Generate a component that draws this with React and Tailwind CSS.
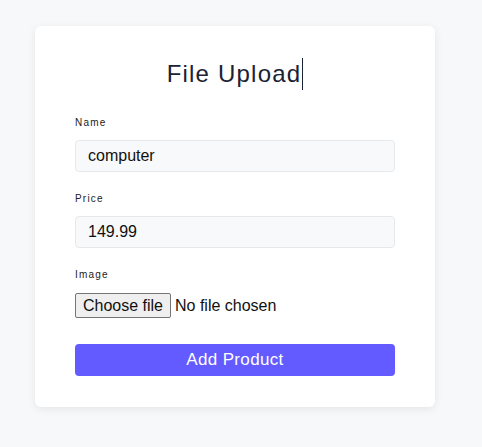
export default function App() {
  return (
    <div className="min-h-[447px] bg-[#f7f8fa] pt-[26px] font-['Liberation_Sans',Arial,sans-serif]">
      <div className="ml-[35px] w-[400px] rounded-md bg-white px-10 pt-8 pb-[31px] shadow-[0_2px_8px_rgba(0,0,0,0.08)]">
        <h1 className="flex justify-center text-[24px] leading-8 tracking-[0.05em] text-[#1a2233]">
          <span className="border-r border-[#1a2233] pr-[1px]">File Upload</span>
        </h1>

        <label className="mt-[26px] block text-[10px] leading-[14px] tracking-[0.12em] text-[#222]">Name</label>
        <input
          type="text"
          defaultValue="computer"
          className="mt-[10px] block h-8 w-full rounded border border-[#e6e8eb] bg-[#f8f9fb] px-3 text-base text-[#111] outline-none"
        />

        <label className="mt-[20px] block text-[10px] leading-[14px] tracking-[0.12em] text-[#222]">Price</label>
        <input
          type="text"
          defaultValue="149.99"
          className="mt-[10px] block h-8 w-full rounded border border-[#e6e8eb] bg-[#f8f9fb] px-3 text-base text-[#111] outline-none"
        />

        <label className="mt-[20px] block text-[10px] leading-[14px] tracking-[0.12em] text-[#222]">Image</label>
        <label className="mt-[11px] flex h-[25px] items-center gap-[4px] text-base text-[#111]">
          <span className="flex h-[25px] w-[96px] items-center justify-center rounded-[2px] border border-[#767676] bg-[#efefef]">
            Choose file
          </span>
          <span>No file chosen</span>
          <input type="file" className="hidden" />
        </label>

        <button className="mt-[26px] block h-8 w-full rounded bg-[#635bff] text-[17px] tracking-[0.02em] text-white">
          Add Product
        </button>
      </div>
    </div>
  )
}
